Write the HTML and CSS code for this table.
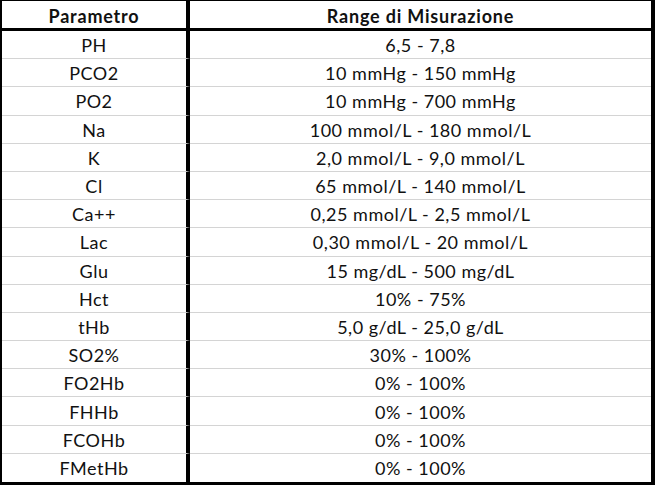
FILE: index.html
```html
<!DOCTYPE html>
<html lang="it">
<head>
<meta charset="utf-8">
<title>Parametri</title>
<link rel="stylesheet" href="styles.css">
</head>
<body>
<div class="table">
  <div class="cell head first">Parametro</div>
  <div class="cell head">Range di Misurazione</div>
  <div class="cell first">PH</div><div class="cell">6,5 - 7,8</div>
  <div class="cell first">PCO2</div><div class="cell">10 mmHg - 150 mmHg</div>
  <div class="cell first">PO2</div><div class="cell">10 mmHg - 700 mmHg</div>
  <div class="cell first">Na</div><div class="cell">100 mmol/L - 180 mmol/L</div>
  <div class="cell first">K</div><div class="cell">2,0 mmol/L - 9,0 mmol/L</div>
  <div class="cell first">Cl</div><div class="cell">65 mmol/L - 140 mmol/L</div>
  <div class="cell first">Ca++</div><div class="cell">0,25 mmol/L - 2,5 mmol/L</div>
  <div class="cell first">Lac</div><div class="cell">0,30 mmol/L - 20 mmol/L</div>
  <div class="cell first">Glu</div><div class="cell">15 mg/dL - 500 mg/dL</div>
  <div class="cell first">Hct</div><div class="cell">10% - 75%</div>
  <div class="cell first">tHb</div><div class="cell">5,0 g/dL - 25,0 g/dL</div>
  <div class="cell first">SO2%</div><div class="cell">30% - 100%</div>
  <div class="cell first">FO2Hb</div><div class="cell">0% - 100%</div>
  <div class="cell first">FHHb</div><div class="cell">0% - 100%</div>
  <div class="cell first">FCOHb</div><div class="cell">0% - 100%</div>
  <div class="cell first last">FMetHb</div><div class="cell last">0% - 100%</div>
</div>
</body>
</html>
```
FILE: styles.css
```css
html, body {
  margin: 0;
  padding: 0;
  background: #ffffff;
}
.table {
  box-sizing: border-box;
  width: 655px;
  height: 485px;
  border-style: solid;
  border-color: #000000;
  border-width: 1px 4px 3px 2px;
  display: grid;
  grid-template-columns: 188px 1fr;
  grid-template-rows: 30px repeat(16, 1fr);
  font-family: "Lato", "Liberation Sans", sans-serif;
  font-size: 18px;
  letter-spacing: 0.5px;
  color: #111111;
}
.cell {
  box-sizing: border-box;
  display: flex;
  align-items: center;
  justify-content: center;
  border-bottom: 1px solid #d4d4d4;
  padding-top: 1px;
  white-space: nowrap;
}
.first {
  border-right: 4px solid #000000;
}
.head {
  font-weight: bold;
  letter-spacing: 0.8px;
  border-bottom: 3px solid #000000;
  padding-top: 2px;
}
.last {
  border-bottom: none;
}
```
